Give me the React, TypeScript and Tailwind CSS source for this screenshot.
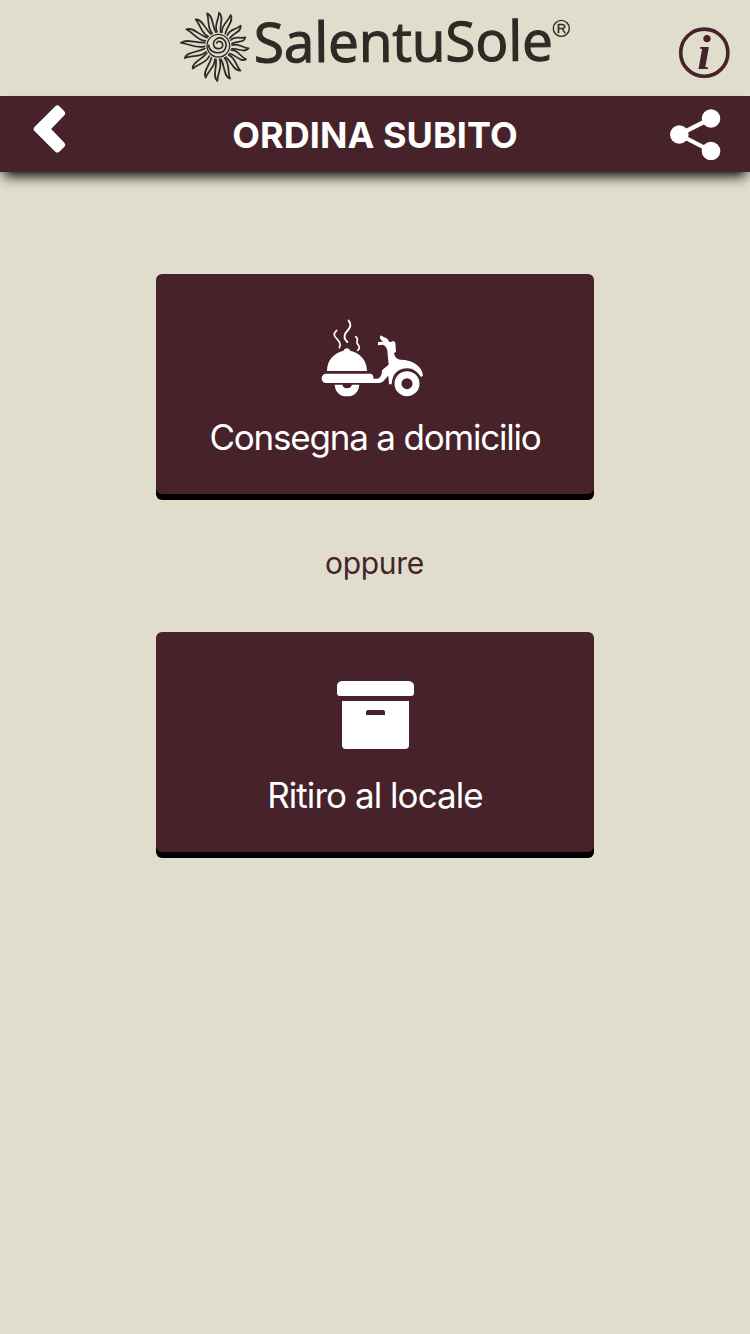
import React from 'react';

// Tips of the sun rays, clockwise from the top
const RAY_TIPS: [number, number][] = [
    [147, 38], [182, 45], [212, 77], [226, 112], [236, 145], [228, 178], [211, 212], [180, 236],
    [142, 243], [107, 233], [68, 206], [44, 174], [33, 129], [49, 88], [77, 58], [111, 40],
];

const rayPath = ([tx, ty]: [number, number]) => {
    const cx = 145;
    const cy = 137;
    const len = Math.hypot(tx - cx, ty - cy);
    const ux = (tx - cx) / len;
    const uy = (ty - cy) / len;
    const at = (r: number, side: number) => `${(cx + ux * r - uy * side).toFixed(1)} ${(cy + uy * r + ux * side).toFixed(1)}`;
    const span = len - 41;
    return [
        `M${at(41, -5)}`,
        `C${at(41 + span * 0.35, -15)} ${at(41 + span * 0.6, 0)} ${at(len, 0)}`,
        `C${at(41 + span * 0.8, 16)} ${at(41 + span * 0.4, 2)} ${at(41, 6)}`,
    ].join(' ');
};

const Logo = () => (
    <svg className="h-[96px] w-[410px]" viewBox="0 0 410 96" role="img" aria-label="SalentuSole">
        <g transform="scale(0.3333)" fill="none" stroke="#2e2a26" strokeWidth="5.2" strokeLinecap="round" strokeLinejoin="round">
            {RAY_TIPS.map(tip => <path key={tip.join('-')} d={rayPath(tip)} />)}
            <circle cx="145" cy="137" r="34" strokeWidth="4" />
            <path strokeWidth="4.8" d="M140 129 C143 121 158 123 158 135 C158 149 135 150 131 136 C128 120 145 108 159 117 C176 130 168 156 148 158 C130 160 117 150 116 136" />
        </g>
        <g fill="#2e2a26" stroke="#2e2a26" strokeWidth="1.2" transform="rotate(-0.4 84 62)">
            <text x="84" y="62.5" fontSize="55" textLength="299" lengthAdjust="spacingAndGlyphs" className="font-['Open_Sans',sans-serif]">SalentuSole</text>
        </g>
        <circle cx="391.3" cy="28.4" r="8" fill="none" stroke="#2e2a26" strokeWidth="1.4" />
        <text x="391.5" y="33.2" fontSize="13" textAnchor="middle" className="font-['Liberation_Sans',sans-serif]" fill="#2e2a26" stroke="#2e2a26" strokeWidth="0.4">R</text>
    </svg>
);

const InfoIcon = () => (
    <svg className="h-[60px] w-[52px]" viewBox="0 0 52 60">
        <circle cx="26.3" cy="26.7" r="23.6" fill="none" stroke="#47222a" strokeWidth="3.6" />
        <text x="26" y="42.5" fontSize="49" textAnchor="middle" fill="#47222a" className="font-['Liberation_Serif',serif] leading-none font-bold italic">i</text>
    </svg>
);

const BackIcon = () => (
    <svg className="h-[50px] w-[34px]" viewBox="0 0 34 50">
        <path d="M5 25 L25.3 4.8 L29.8 9.3 L14.6 25 L29.8 40.7 L25.3 45.2 Z" fill="#fff" stroke="#fff" strokeWidth="6.5" strokeLinejoin="round" />
    </svg>
);

const ShareIcon = () => (
    <svg className="h-[52px] w-[52px]" viewBox="0 0 52 52" fill="#fff">
        <path d="M42 10.5 L10 26.5 L42 43" fill="none" stroke="#fff" strokeWidth="4.2" />
        <circle cx="42" cy="10.5" r="9.3" />
        <circle cx="10.3" cy="26.5" r="9.3" />
        <circle cx="42" cy="43" r="9.3" />
    </svg>
);

const ScooterIcon = () => (
    <svg className="mr-[4px] h-[80px] w-[106px]" viewBox="30 24 318 240" fill="#fff">
        <g fill="none" stroke="#fff" strokeLinecap="round">
            <path strokeWidth="5" d="M80 61 C65 75 76 80 86 93 C91 100 91 108 88 113" />
            <path strokeWidth="6" d="M116 32 C129 49 115 57 107 69 C101 79 104 89 112 96" />
            <path strokeWidth="5" d="M137 80 C149 89 137 94 142 101 C151 111 149 116 143 121" />
        </g>
        <path d="M51 183 C51 150 73 128 101 122 C101 112 120 112 120 122 C150 128 171 151 171 183 Z" />
        <path d="M47 191 H180 C188 191 192 199 190 206 H203 C213 204 216 192 216 181 L236 164 L232 122 C230 111 225 106 218 104 L204 106 V96 L219 95 L210 86 L211 76 L232 86 L239 97 L251 93 L256 98 L258 125 L252 130 C255 144 263 149 272 149 C307 149 337 168 339 197 L333 201 C321 184 309 175 292 175 C265 175 247 190 245 223 H237 L235 197 C226 204 221 219 206 219 H47 C31 217 31 193 47 191 Z" />
        <path d="M74 224 H97 C99 238 123 238 126 224 H148 C146 246 133 259 111 259 C89 259 76 246 74 224 Z" />
        <circle cx="291" cy="221" r="27" fill="none" stroke="#fff" strokeWidth="21" />
    </svg>
);

const BoxIcon = () => (
    <svg className="h-[70px] w-[78px]" viewBox="0 0 78 70" fill="#fff">
        <path d="M5.5 0 H73 Q78 1 78 5 V12 Q78 15 75 15 H3.5 Q1 15 1 12 V5 Q1 1 5.5 0 Z" />
        <path fillRule="evenodd" d="M6 20 H73 V64 Q73 68 69 68 H10 Q6 68 6 64 Z M32 29 Q30 29 30 31 V34 H49 V31 Q49 29 47 29 Z" />
    </svg>
);

interface ChoiceButtonProps {
    icon: React.ReactNode;
    label: string;
    textClass: string;
}

const ChoiceButton: React.FC<ChoiceButtonProps> = ({ icon, label, textClass }) => (
    <button className="flex h-[220px] w-[438px] flex-col items-center rounded-[6px] bg-[#47222a] pt-[44px] text-white shadow-[0_6px_0_#000]">
        <span className="flex h-[80px] items-center justify-center">{icon}</span>
        <span className={`mt-[17px] whitespace-nowrap text-[35px] leading-[44px] ${textClass}`}>{label}</span>
    </button>
);

const App: React.FC = () => (
    <div className="min-h-[1334px] w-[750px] overflow-hidden bg-[#e0ddcc] font-['Inter',sans-serif]">
        <header className="flex h-[96px] justify-between pr-[20px] pl-[170px]">
            <Logo />
            <button className="mt-[26px] h-[60px]" aria-label="Info"><InfoIcon /></button>
        </header>

        <nav className="flex h-[76px] items-center justify-between bg-[#47222a] pr-[29px] pl-[32px] text-white shadow-[0_8px_12px_-4px_#000]">
            <button className="-mt-[10px] w-[52px]" aria-label="Indietro"><BackIcon /></button>
            <h1 className="pt-[1px] pr-[3px] text-[36px] leading-[44px] font-bold tracking-[0.05px]">ORDINA SUBITO</h1>
            <button aria-label="Condividi"><ShareIcon /></button>
        </nav>

        <main className="flex flex-col items-center pt-[102px]">
            <ChoiceButton icon={<ScooterIcon />} label="Consegna a domicilio" textClass="tracking-[-1.2px]" />
            <p className="mt-[49px] mb-[49px] pr-[1px] text-[30px] leading-[40px] tracking-[-0.3px] text-[#47222a]">oppure</p>
            <ChoiceButton icon={<BoxIcon />} label="Ritiro al locale" textClass="tracking-[-0.95px]" />
        </main>
    </div>
);

export default App;
